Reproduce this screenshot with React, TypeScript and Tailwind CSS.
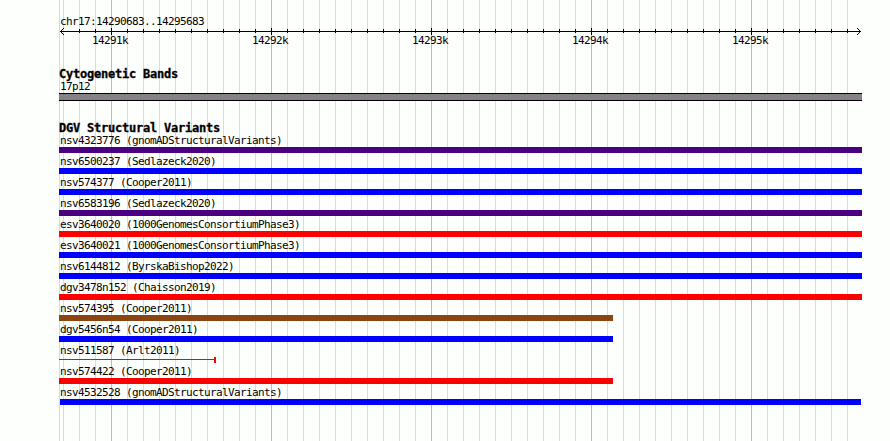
type Variant = {
  id: string
  study: string
  color: string
  extent: string
  shape?: 'bar' | 'line'
}

const variants: Variant[] = [
  { id: 'nsv4323776', study: 'gnomADStructuralVariants', color: 'bg-[#4b0082]', extent: 'w-[803px]' },
  { id: 'nsv6500237', study: 'Sedlazeck2020', color: 'bg-[#0000ff]', extent: 'w-[803px]' },
  { id: 'nsv574377', study: 'Cooper2011', color: 'bg-[#0000ff]', extent: 'w-[803px]' },
  { id: 'nsv6583196', study: 'Sedlazeck2020', color: 'bg-[#4b0082]', extent: 'w-[803px]' },
  { id: 'esv3640020', study: '1000GenomesConsortiumPhase3', color: 'bg-[#ff0000]', extent: 'w-[803px]' },
  { id: 'esv3640021', study: '1000GenomesConsortiumPhase3', color: 'bg-[#0000ff]', extent: 'w-[803px]' },
  { id: 'nsv6144812', study: 'ByrskaBishop2022', color: 'bg-[#0000ff]', extent: 'w-[803px]' },
  { id: 'dgv3478n152', study: 'Chaisson2019', color: 'bg-[#ff0000]', extent: 'w-[803px]' },
  { id: 'nsv574395', study: 'Cooper2011', color: 'bg-[#8b4513]', extent: 'w-[554px]' },
  { id: 'dgv5456n54', study: 'Cooper2011', color: 'bg-[#0000ff]', extent: 'w-[554px]' },
  { id: 'nsv511587', study: 'Arlt2011', color: 'bg-[#ff0000]', extent: 'w-[157px]', shape: 'line' },
  { id: 'nsv574422', study: 'Cooper2011', color: 'bg-[#ff0000]', extent: 'w-[554px]' },
  { id: 'nsv4532528', study: 'gnomADStructuralVariants', color: 'bg-[#0000ff]', extent: 'ml-px w-[801px]' },
]

const positions = ['14291k', '14292k', '14293k', '14294k', '14295k']

// one tick every 100 bases, a major one every 1000
const ticks = Array.from({ length: 50 }, (_, i) => ({ x: 4 + i * 16, major: i % 10 === 3 }))

function Grid() {
  return (
    <svg className="absolute left-[59px] top-0" width="803" height="441" shapeRendering="crispEdges">
      <rect x="0" y="0" width="1" height="441" fill="#afeeee" />
      {ticks.map(({ x, major }) => (
        <rect key={x} x={x} y="0" width="1" height="441" fill={major ? '#87ceeb' : '#afeeee'} />
      ))}
    </svg>
  )
}

function Axis() {
  return (
    <svg className="block" width="803" height="7" shapeRendering="crispEdges">
      <rect x="1" y="3" width="801" height="1" />
      {ticks.slice(1).map(({ x, major }) => (
        <rect key={x} x={x} y={major ? 0 : 1} width="1" height={major ? 7 : 4} />
      ))}
      <path d="M2 2h1v1h-1zM3 1h1v1h-1zM4 0h1v1h-1zM2 4h1v1h-1zM3 5h1v1h-1zM4 6h1v1h-1z" />
      <path d="M800 2h1v1h-1zM799 1h1v1h-1zM798 0h1v1h-1zM800 4h1v1h-1zM799 5h1v1h-1zM798 6h1v1h-1z" />
    </svg>
  )
}

function TrackTitle({ children }: { children: string }) {
  return (
    <h2 className="-mb-px text-[12px] font-bold leading-[14px] tracking-[-0.224px] [-webkit-text-stroke:0.3px_black]">
      {children}
    </h2>
  )
}

function VariantRow({ id, study, color, extent, shape = 'bar' }: Variant) {
  return (
    <li className="flex flex-col">
      <span className="pl-px">{id} ({study})</span>
      {shape === 'bar' ? (
        <div className={`h-1.5 ${extent} ${color}`} />
      ) : (
        <div className={`flex h-1.5 ${extent}`}>
          <div className={`mt-0.5 h-px flex-1 ${color}`} />
          <div className={`h-1.5 w-0.5 ${color}`} />
        </div>
      )}
    </li>
  )
}

export default function App() {
  return (
    <div className="relative h-[441px] w-[890px] overflow-hidden bg-[#fdfffc]">
      <Grid />
      <main className="relative flex flex-col whitespace-pre pl-[59px] pt-[15px] font-['DejaVu_Sans_Mono',monospace] text-[11px] leading-[13px] tracking-[-0.622px] text-black">
        <div className="pl-px">chr17:14290683..14295683</div>
        <Axis />
        <div className="-ml-[29px] -mt-px flex">
          {positions.map((position) => (
            <span key={position} className="w-40 text-center">{position}</span>
          ))}
        </div>

        <section className="mt-5">
          <TrackTitle>Cytogenetic Bands</TrackTitle>
          <div className="pl-px">17p12</div>
          <div className="h-2 w-[803px] border-y border-black bg-[#848284]" />
        </section>

        <section className="mt-5">
          <TrackTitle>DGV Structural Variants</TrackTitle>
          <ul className="flex flex-col gap-0.5">
            {variants.map((variant) => (
              <VariantRow key={variant.id} {...variant} />
            ))}
          </ul>
        </section>
      </main>
    </div>
  )
}
